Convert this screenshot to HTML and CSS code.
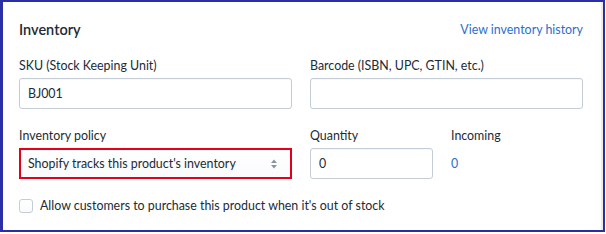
FILE: index.html
```html
<!DOCTYPE html>
<html>
<head>
<meta charset="utf-8">
<link rel="stylesheet" href="styles.css">
</head>
<body>
<div class="frame">
  <div class="card">
    <div class="card-header">
      <h2 class="title">Inventory</h2>
      <a class="link" href="#">View inventory history</a>
    </div>
    <div class="row two">
      <div class="field">
        <label class="label">SKU (Stock Keeping Unit)</label>
        <div class="input">BJ001</div>
      </div>
      <div class="field">
        <label class="label">Barcode (ISBN, UPC, GTIN, etc.)</label>
        <div class="input"></div>
      </div>
    </div>
    <div class="row three">
      <div class="field">
        <label class="label">Inventory policy</label>
        <div class="select">
          <span>Shopify tracks this product's inventory</span>
          <svg class="arrows" width="8" height="12" viewBox="0 0 8 12"><path d="M4 1.5 L7 5 H1 Z" fill="#8a95a0"/><path d="M4 10.5 L7 7 H1 Z" fill="#8a95a0"/></svg>
        </div>
      </div>
      <div class="field">
        <label class="label">Quantity</label>
        <div class="input">0</div>
      </div>
      <div class="field">
        <label class="label">Incoming</label>
        <div class="value">0</div>
      </div>
    </div>
    <div class="check-row">
      <span class="checkbox"></span>
      <span class="check-label">Allow customers to purchase this product when it's out of stock</span>
    </div>
  </div>
</div>
</body>
</html>
```
FILE: styles.css
```css
html, body {
  margin: 0;
  padding: 0;
  background: #ffffff;
}
body {
  font-family: "Lato", "Liberation Sans", sans-serif;
  font-size: 12.4px;
  color: #212b36;
}
.frame {
  width: 605px;
  height: 232px;
  box-sizing: border-box;
  border: 2px solid #2b2fa6;
  border-left-width: 3px;
  background: #ffffff;
  box-shadow: inset -2px 0 0 #ecebe6;
}
.card {
  padding: 18px 20px 0 16px;
}
.card-header {
  display: flex;
  justify-content: space-between;
  align-items: center;
  height: 20px;
}
.title {
  margin: 0;
  font-size: 14.5px;
  font-weight: 600;
  line-height: 20px;
}
.link {
  color: #2c6ecb;
  text-decoration: none;
  line-height: 20px;
}
.row {
  display: grid;
  column-gap: 18px;
}
.row.two {
  margin-top: 16px;
  grid-template-columns: 273px 273px;
}
.row.three {
  margin-top: 17px;
  grid-template-columns: 273px 123px 1fr;
}
.field {
  display: flex;
  flex-direction: column;
}
.label {
  line-height: 20px;
  margin-bottom: 2px;
}
.input, .select {
  height: 31px;
  box-sizing: border-box;
  border: 1px solid #c4cdd5;
  border-radius: 3px;
  padding: 0 8px;
  display: flex;
  align-items: center;
  background: #fff;
  box-shadow: inset 0 1px 0 rgba(99,115,129,0.05);
}
.select {
  border: 2px solid #e3001b;
  border-radius: 0;
  padding: 0 7px 0 7px;
  justify-content: space-between;
  background: linear-gradient(#ffffff, #f9fafb);
}
.arrows {
  margin-right: 5px;
}
.value {
  height: 31px;
  display: flex;
  align-items: center;
  color: #2c6ecb;
}
.check-row {
  margin-top: 17px;
  display: flex;
  align-items: center;
  height: 20px;
}
.checkbox {
  width: 14px;
  height: 14px;
  box-sizing: border-box;
  border: 1px solid #c4cdd5;
  border-radius: 3px;
  margin-right: 7px;
  background: linear-gradient(#ffffff, #f9fafb);
}
.check-label {
  line-height: 20px;
}
```
